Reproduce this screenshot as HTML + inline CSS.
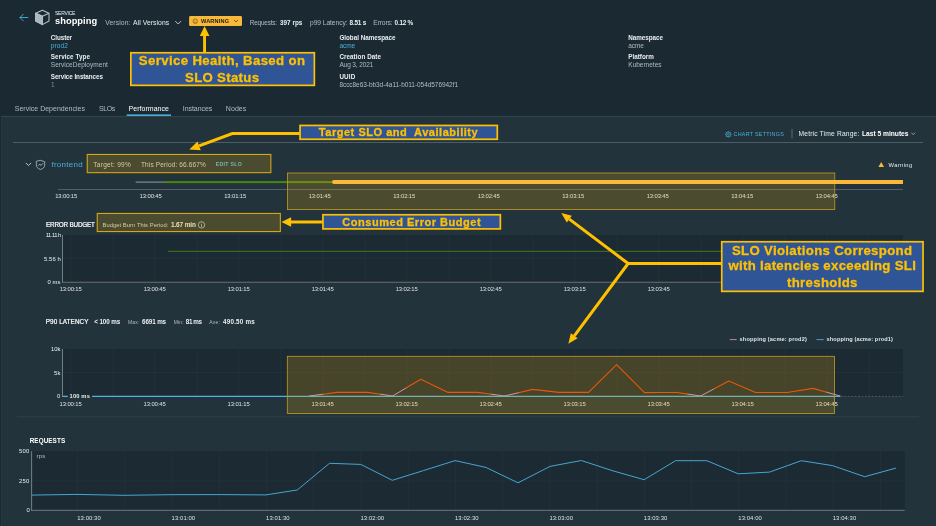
<!DOCTYPE html>
<html lang="en"><head><meta charset="utf-8"><title>Service shopping - Performance</title>
<style>
html,body{margin:0;padding:0;background:#1b2a32;}
#root{position:relative;width:936px;height:526px;overflow:hidden;background:#1b2a32;font-family:"Liberation Sans",sans-serif;}
#gfx,#ovl{position:absolute;left:0;top:0;width:936px;height:526px;display:block;}
.t{position:absolute;white-space:pre;margin:0;padding:0;}
.L{position:absolute;left:0;top:0;width:936px;height:526px;will-change:transform;}

</style></head>
<body>
<div id="root">
<svg id="gfx" width="936" height="526" viewBox="0 0 936 526">
<rect x="0" y="0" width="936" height="116" fill="#1b2a32"/>
<rect x="0" y="116" width="936" height="410" fill="#22333b"/>
<rect x="0" y="116" width="1" height="410" fill="#1b2a32"/>
<rect x="1" y="116" width="0.8" height="410" fill="#283a42"/>
<rect x="1" y="115.9" width="935" height="1" fill="#35474f"/>
<rect x="126.7" y="114.4" width="44.3" height="1.6" fill="#49afd9"/>
<g fill="none" stroke="#49afd9" stroke-width="0.9" stroke-linecap="round" stroke-linejoin="round"><path d="M20 17.5H27.8M23.3 14.2L20 17.5L23.3 20.8"/></g>
<g stroke="#b3bfc6" stroke-width="1.05" stroke-linejoin="round"><path d="M42.4 10.2L49 13.3V21L42.4 24.6L35.7 21V13.3Z" fill="#1b2a32"/><path d="M35.7 13.3L42.4 16.3L49 13.3M42.4 16.3V24.6" fill="none"/><path d="M35.7 13.3L42.4 16.3V24.6L35.7 21Z" fill="#aab7bf"/></g>
<path d="M175.6 21.4L178.2 24L180.8 21.4" fill="none" stroke="#c8d2d8" stroke-width="0.9" stroke-linecap="round" stroke-linejoin="round"/>
<rect x="189.1" y="16.1" width="52.9" height="10" rx="1.4" fill="#f8b838"/>
<g fill="none" stroke="#4a3f1c" stroke-width="0.5"><circle cx="195.3" cy="21.2" r="2.3"/><path d="M194.1 22.2H196.5M194.4 20.4V20.9M196.2 20.4V20.9"/></g>
<path d="M234.2 20.2L236 22L237.8 20.2" fill="none" stroke="#3a3320" stroke-width="0.7" stroke-linecap="round" stroke-linejoin="round"/>
<rect x="13" y="142" width="910" height="0.9" fill="#52636b"/>
<rect x="791.6" y="128.8" width="0.8" height="9.6" fill="#6d7b83"/>
<g transform="translate(-0.2 0.8)" fill="none" stroke="#49afd9" stroke-width="0.7"><circle cx="728.5" cy="133.6" r="2.4"/><circle cx="728.5" cy="133.6" r="0.9"/><path d="M728.5 130.4V131.2M728.5 136V136.8M725.3 133.6H726.1M730.9 133.6H731.7M726.2 131.3L726.8 131.9M730.2 135.3L730.8 135.9M726.2 135.9L726.8 135.3M730.2 131.9L730.8 131.3"/></g>
<path d="M911.6 133L913.2 134.6L914.8 133" fill="none" stroke="#c8d2d8" stroke-width="0.7" stroke-linecap="round" stroke-linejoin="round"/>
<path d="M26.2 163.2L28.5 165.6L30.8 163.2" fill="none" stroke="#c8d2d8" stroke-width="0.9" stroke-linecap="round" stroke-linejoin="round"/>
<g fill="none" stroke="#c8d2d8" stroke-width="0.7" stroke-linejoin="round" stroke-linecap="round"><path d="M40.5 160.4L44.7 161.7V165.1C44.7 167.2 42.9 168.7 40.5 169.5C38.1 168.7 36.3 167.2 36.3 165.1V161.7Z"/><path d="M38.2 165.5L39.7 164L40.9 165.5L42.8 163.5"/></g>
<path d="M881.2 162L884 166.9H878.4Z" fill="#f8b838"/>
<rect x="58" y="189.1" width="845" height="0.8" fill="#5f6d75"/>
<rect x="135.6" y="181.5" width="28.4" height="1.2" fill="#7f8b93"/>
<rect x="164" y="181.1" width="169" height="2" fill="#4a8512"/>
<rect x="62.3" y="235" width="840.7" height="47" fill="#1c2a33"/>
<rect x="70.6" y="235" width="0.7" height="47" fill="#25343c"/>
<rect x="112.6" y="235" width="0.7" height="47" fill="#25343c"/>
<rect x="154.6" y="235" width="0.7" height="47" fill="#25343c"/>
<rect x="196.6" y="235" width="0.7" height="47" fill="#25343c"/>
<rect x="238.6" y="235" width="0.7" height="47" fill="#25343c"/>
<rect x="280.6" y="235" width="0.7" height="47" fill="#25343c"/>
<rect x="322.6" y="235" width="0.7" height="47" fill="#25343c"/>
<rect x="364.6" y="235" width="0.7" height="47" fill="#25343c"/>
<rect x="406.6" y="235" width="0.7" height="47" fill="#25343c"/>
<rect x="448.6" y="235" width="0.7" height="47" fill="#25343c"/>
<rect x="490.6" y="235" width="0.7" height="47" fill="#25343c"/>
<rect x="532.6" y="235" width="0.7" height="47" fill="#25343c"/>
<rect x="574.6" y="235" width="0.7" height="47" fill="#25343c"/>
<rect x="616.6" y="235" width="0.7" height="47" fill="#25343c"/>
<rect x="658.6" y="235" width="0.7" height="47" fill="#25343c"/>
<rect x="700.6" y="235" width="0.7" height="47" fill="#25343c"/>
<rect x="742.6" y="235" width="0.7" height="47" fill="#25343c"/>
<rect x="784.6" y="235" width="0.7" height="47" fill="#25343c"/>
<rect x="826.6" y="235" width="0.7" height="47" fill="#25343c"/>
<rect x="868.6" y="235" width="0.7" height="47" fill="#25343c"/>
<rect x="62.3" y="258.3" width="840.7" height="0.7" fill="#25343c"/>
<rect x="168" y="250.8" width="735" height="1" fill="#3f7d16"/>
<rect x="62" y="235" width="0.9" height="47.4" fill="#7c8991"/>
<rect x="62" y="281.8" width="841" height="0.8" fill="#85787f"/>
<rect x="62.3" y="349" width="840.7" height="47.7" fill="#1c2a33"/>
<rect x="70.6" y="349" width="0.7" height="47.7" fill="#25343c"/>
<rect x="112.6" y="349" width="0.7" height="47.7" fill="#25343c"/>
<rect x="154.6" y="349" width="0.7" height="47.7" fill="#25343c"/>
<rect x="196.6" y="349" width="0.7" height="47.7" fill="#25343c"/>
<rect x="238.6" y="349" width="0.7" height="47.7" fill="#25343c"/>
<rect x="280.6" y="349" width="0.7" height="47.7" fill="#25343c"/>
<rect x="322.6" y="349" width="0.7" height="47.7" fill="#25343c"/>
<rect x="364.6" y="349" width="0.7" height="47.7" fill="#25343c"/>
<rect x="406.6" y="349" width="0.7" height="47.7" fill="#25343c"/>
<rect x="448.6" y="349" width="0.7" height="47.7" fill="#25343c"/>
<rect x="490.6" y="349" width="0.7" height="47.7" fill="#25343c"/>
<rect x="532.6" y="349" width="0.7" height="47.7" fill="#25343c"/>
<rect x="574.6" y="349" width="0.7" height="47.7" fill="#25343c"/>
<rect x="616.6" y="349" width="0.7" height="47.7" fill="#25343c"/>
<rect x="658.6" y="349" width="0.7" height="47.7" fill="#25343c"/>
<rect x="700.6" y="349" width="0.7" height="47.7" fill="#25343c"/>
<rect x="742.6" y="349" width="0.7" height="47.7" fill="#25343c"/>
<rect x="784.6" y="349" width="0.7" height="47.7" fill="#25343c"/>
<rect x="826.6" y="349" width="0.7" height="47.7" fill="#25343c"/>
<rect x="868.6" y="349" width="0.7" height="47.7" fill="#25343c"/>
<rect x="62.3" y="372.3" width="840.7" height="0.7" fill="#25343c"/>
<rect x="62" y="349" width="0.9" height="48" fill="#7c8991"/>
<path d="M309.2 396.0L323.0 394.2M380.3 394.2L392.6 396.0M392.6 396.0L406.7 387.6M491.1 394.2L504.5 396.0M504.5 396.0L518.6 392.7M687.8 394.1L700.6 396.0M700.6 396.0L714.7 388.5M826.6 392.2L840.2 396.0" fill="none" stroke="#cc90c6" stroke-width="1" stroke-linecap="round"/>
<path d="M323.0 394.2L336.8 392.4M336.8 392.4L368.0 392.4M368.0 392.4L380.3 394.2M406.7 387.6L420.8 379.2M420.8 379.2L448.1 392.4M448.1 392.4L477.6 392.4M477.6 392.4L491.1 394.2M518.6 392.7L532.7 389.4M532.7 389.4L559.0 392.4M559.0 392.4L588.5 392.4M588.5 392.4L616.6 364.7M616.6 364.7L644.5 392.6M644.5 392.6L675.0 392.2M675.0 392.2L687.8 394.1M714.7 388.5L728.8 381.0M728.8 381.0L755.6 392.5M755.6 392.5L787.3 392.5M787.3 392.5L813.0 388.4M813.0 388.4L826.6 392.2" fill="none" stroke="#e2420c" stroke-width="1.15" stroke-linecap="round"/>
<path d="M841 396.4H903" stroke="#66747c" stroke-width="0.7" stroke-dasharray="1.9 1.5" fill="none"/>
<path d="M62.8 396.4H67.8M92 396.4H840" stroke="#4fb3dd" stroke-width="1.3" fill="none"/>
<rect x="729.8" y="339.2" width="6.8" height="0.9" fill="#c58fd0"/>
<rect x="816.5" y="339.2" width="7.2" height="0.9" fill="#49afd9"/>
<rect x="17" y="416.4" width="902" height="0.9" fill="#2f414a"/>
<rect x="31.6" y="451.2" width="873.1" height="59" fill="#1c2a33"/>
<rect x="77.3" y="451.2" width="0.7" height="59" fill="#25343c"/>
<rect x="124.5" y="451.2" width="0.7" height="59" fill="#25343c"/>
<rect x="171.7" y="451.2" width="0.7" height="59" fill="#25343c"/>
<rect x="219.0" y="451.2" width="0.7" height="59" fill="#25343c"/>
<rect x="266.2" y="451.2" width="0.7" height="59" fill="#25343c"/>
<rect x="313.4" y="451.2" width="0.7" height="59" fill="#25343c"/>
<rect x="360.6" y="451.2" width="0.7" height="59" fill="#25343c"/>
<rect x="407.8" y="451.2" width="0.7" height="59" fill="#25343c"/>
<rect x="455.1" y="451.2" width="0.7" height="59" fill="#25343c"/>
<rect x="502.3" y="451.2" width="0.7" height="59" fill="#25343c"/>
<rect x="549.5" y="451.2" width="0.7" height="59" fill="#25343c"/>
<rect x="596.7" y="451.2" width="0.7" height="59" fill="#25343c"/>
<rect x="643.9" y="451.2" width="0.7" height="59" fill="#25343c"/>
<rect x="691.2" y="451.2" width="0.7" height="59" fill="#25343c"/>
<rect x="738.4" y="451.2" width="0.7" height="59" fill="#25343c"/>
<rect x="785.6" y="451.2" width="0.7" height="59" fill="#25343c"/>
<rect x="832.8" y="451.2" width="0.7" height="59" fill="#25343c"/>
<rect x="880.0" y="451.2" width="0.7" height="59" fill="#25343c"/>
<rect x="31.6" y="480.6" width="873.1" height="0.7" fill="#25343c"/>
<rect x="31.2" y="451.2" width="0.9" height="59.4" fill="#7c8991"/>
<rect x="31.2" y="509.8" width="873.5" height="0.9" fill="#75828a"/>
<path d="M31.6 495.1 L77.0 494.4 L124.0 495.3 L171.0 494.7 L218.0 494.6 L265.9 494.9 L297.2 490.0 L329.5 463.3 L360.8 464.4 L392.3 480.3 L423.7 470.5 L455.1 460.6 L485.9 467.4 L518.0 482.8 L550.0 466.4 L581.3 460.5 L612.8 470.8 L644.1 479.7 L675.6 460.7 L706.9 460.7 L738.2 473.8 L769.5 472.1 L801.3 460.7 L832.5 465.6 L864.7 476.7 L895.9 468.1" fill="none" stroke="#45a6d4" stroke-width="1" stroke-linejoin="round"/>
</svg>
<!-- text layer -->
<div class="L">
<div class="t" style="left:55.0px;top:10px;font-size:5.0px;line-height:7px;font-weight:400;color:#e9eef1;letter-spacing:-0.239px;">SERVICE</div>
<div class="t" style="left:55.0px;top:15px;font-size:9.3px;line-height:13px;font-weight:700;color:#ffffff;letter-spacing:0.034px;">shopping</div>
<div class="t" style="left:105.2px;top:18px;font-size:6.8px;line-height:10px;font-weight:400;color:#b0bcc3;letter-spacing:0.092px;">Version:</div>
<div class="t" style="left:133.0px;top:18px;font-size:6.8px;line-height:10px;font-weight:400;color:#e9eef1;letter-spacing:0.057px;">All Versions</div>
<div class="t" style="left:201.0px;top:17px;font-size:5.6px;line-height:8px;font-weight:700;color:#1f1d10;letter-spacing:0.165px;">WARNING</div>
<div class="t" style="left:249.7px;top:18px;font-size:6.4px;line-height:9px;font-weight:400;color:#b0bcc3;letter-spacing:-0.165px;">Requests:</div>
<div class="t" style="left:279.9px;top:18px;font-size:6.4px;line-height:9px;font-weight:700;color:#e9eef1;letter-spacing:0.016px;">397 rps</div>
<div class="t" style="left:310.0px;top:18px;font-size:6.7px;line-height:9px;font-weight:400;color:#b0bcc3;letter-spacing:-0.066px;">p99 Latency:</div>
<div class="t" style="left:349.6px;top:18px;font-size:6.4px;line-height:9px;font-weight:700;color:#e9eef1;letter-spacing:-0.230px;">8.51 s</div>
<div class="t" style="left:373.3px;top:18px;font-size:6.7px;line-height:9px;font-weight:400;color:#b0bcc3;letter-spacing:-0.123px;">Errors:</div>
<div class="t" style="left:394.6px;top:18px;font-size:6.4px;line-height:9px;font-weight:700;color:#e9eef1;letter-spacing:-0.268px;">0.12 %</div>
<div class="t" style="left:50.8px;top:33px;font-size:6.3px;line-height:9px;font-weight:700;color:#e9eef1;letter-spacing:-0.072px;">Cluster</div>
<div class="t" style="left:50.8px;top:41px;font-size:6.5px;line-height:9px;font-weight:400;color:#49afd9;letter-spacing:0.115px;">prod2</div>
<div class="t" style="left:50.8px;top:52px;font-size:6.3px;line-height:9px;font-weight:700;color:#e9eef1;letter-spacing:0.067px;">Service Type</div>
<div class="t" style="left:50.8px;top:60px;font-size:6.5px;line-height:9px;font-weight:400;color:#b0bcc3;letter-spacing:0.044px;">ServiceDeployment</div>
<div class="t" style="left:50.8px;top:72px;font-size:6.3px;line-height:9px;font-weight:700;color:#e9eef1;letter-spacing:-0.066px;">Service Instances</div>
<div class="t" style="left:51.0px;top:80px;font-size:6.5px;line-height:9px;font-weight:400;color:#7e8c95;letter-spacing:-1.625px;">1</div>
<div class="t" style="left:339.4px;top:33px;font-size:6.3px;line-height:9px;font-weight:700;color:#e9eef1;letter-spacing:-0.010px;">Global Namespace</div>
<div class="t" style="left:339.4px;top:41px;font-size:6.5px;line-height:9px;font-weight:400;color:#49afd9;letter-spacing:-0.027px;">acme</div>
<div class="t" style="left:339.4px;top:52px;font-size:6.3px;line-height:9px;font-weight:700;color:#e9eef1;letter-spacing:0.050px;">Creation Date</div>
<div class="t" style="left:339.4px;top:60px;font-size:6.5px;line-height:9px;font-weight:400;color:#b0bcc3;letter-spacing:-0.106px;">Aug 3, 2021</div>
<div class="t" style="left:339.4px;top:72px;font-size:6.3px;line-height:9px;font-weight:700;color:#e9eef1;letter-spacing:0.148px;">UUID</div>
<div class="t" style="left:339.4px;top:80px;font-size:6.5px;line-height:9px;font-weight:400;color:#b0bcc3;letter-spacing:-0.052px;">8ccc8e63-bb3d-4a11-b011-054d576942f1</div>
<div class="t" style="left:628.3px;top:33px;font-size:6.3px;line-height:9px;font-weight:700;color:#e9eef1;letter-spacing:-0.035px;">Namespace</div>
<div class="t" style="left:628.3px;top:41px;font-size:6.5px;line-height:9px;font-weight:400;color:#b0bcc3;letter-spacing:-0.102px;">acme</div>
<div class="t" style="left:628.3px;top:52px;font-size:6.3px;line-height:9px;font-weight:700;color:#e9eef1;letter-spacing:-0.006px;">Platform</div>
<div class="t" style="left:628.3px;top:60px;font-size:6.5px;line-height:9px;font-weight:400;color:#b0bcc3;letter-spacing:-0.005px;">Kubernetes</div>
<div class="t" style="left:14.8px;top:104px;font-size:7.0px;line-height:10px;font-weight:400;color:#b0bcc3;letter-spacing:0.008px;">Service Dependencies</div>
<div class="t" style="left:98.9px;top:104px;font-size:7.0px;line-height:10px;font-weight:400;color:#b0bcc3;letter-spacing:-0.354px;">SLOs</div>
<div class="t" style="left:128.6px;top:104px;font-size:7.0px;line-height:10px;font-weight:400;color:#ffffff;letter-spacing:0.020px;">Performance</div>
<div class="t" style="left:182.8px;top:104px;font-size:7.0px;line-height:10px;font-weight:400;color:#b0bcc3;letter-spacing:-0.063px;">Instances</div>
<div class="t" style="left:225.8px;top:104px;font-size:7.0px;line-height:10px;font-weight:400;color:#b0bcc3;letter-spacing:0.073px;">Nodes</div>
<div class="t" style="left:733.5px;top:130px;font-size:5.4px;line-height:8px;font-weight:400;color:#49afd9;letter-spacing:0.262px;">CHART SETTINGS</div>
<div class="t" style="left:798.5px;top:129px;font-size:6.7px;line-height:9px;font-weight:400;color:#e9eef1;letter-spacing:0.168px;">Metric Time Range:</div>
<div class="t" style="left:862.0px;top:129px;font-size:6.7px;line-height:9px;font-weight:700;color:#ffffff;letter-spacing:-0.023px;">Last 5 minutes</div>
<div class="t" style="left:51.4px;top:159px;font-size:8.0px;line-height:11px;font-weight:400;color:#49afd9;letter-spacing:0.268px;">frontend</div>
<div class="t" style="left:93.3px;top:160px;font-size:6.5px;line-height:9px;font-weight:400;color:#cfd1c4;letter-spacing:0.274px;">Target: 99%</div>
<div class="t" style="left:141.0px;top:160px;font-size:6.5px;line-height:9px;font-weight:400;color:#cfd1c4;letter-spacing:0.142px;">This Period: 66.667%</div>
<div class="t" style="left:215.8px;top:161px;font-size:5.2px;line-height:7px;font-weight:700;color:#52b4dc;letter-spacing:0.285px;">EDIT SLO</div>
<div class="t" style="left:888.5px;top:161px;font-size:5.8px;line-height:8px;font-weight:400;color:#e9eef1;letter-spacing:0.375px;">Warning</div>
<div class="t" style="left:55.2px;top:192px;font-size:5.9px;line-height:8px;font-weight:400;color:#dfe4e7;letter-spacing:-0.117px;">13:00:15</div>
<div class="t" style="left:139.7px;top:192px;font-size:5.9px;line-height:8px;font-weight:400;color:#dfe4e7;letter-spacing:-0.117px;">13:00:45</div>
<div class="t" style="left:224.2px;top:192px;font-size:5.9px;line-height:8px;font-weight:400;color:#dfe4e7;letter-spacing:-0.117px;">13:01:15</div>
<div class="t" style="left:308.7px;top:192px;font-size:5.9px;line-height:8px;font-weight:400;color:#dfe4e7;letter-spacing:-0.117px;">13:01:45</div>
<div class="t" style="left:393.2px;top:192px;font-size:5.9px;line-height:8px;font-weight:400;color:#dfe4e7;letter-spacing:-0.117px;">13:02:15</div>
<div class="t" style="left:477.7px;top:192px;font-size:5.9px;line-height:8px;font-weight:400;color:#dfe4e7;letter-spacing:-0.117px;">13:02:45</div>
<div class="t" style="left:562.2px;top:192px;font-size:5.9px;line-height:8px;font-weight:400;color:#dfe4e7;letter-spacing:-0.117px;">13:03:15</div>
<div class="t" style="left:646.7px;top:192px;font-size:5.9px;line-height:8px;font-weight:400;color:#dfe4e7;letter-spacing:-0.117px;">13:03:45</div>
<div class="t" style="left:731.2px;top:192px;font-size:5.9px;line-height:8px;font-weight:400;color:#dfe4e7;letter-spacing:-0.117px;">13:04:15</div>
<div class="t" style="left:815.7px;top:192px;font-size:5.9px;line-height:8px;font-weight:400;color:#dfe4e7;letter-spacing:-0.117px;">13:04:45</div>
<div class="t" style="left:46.0px;top:220px;font-size:6.3px;line-height:9px;font-weight:400;color:#ffffff;letter-spacing:-0.161px;-webkit-text-stroke:0.2px #fff;">ERROR BUDGET</div>
<div class="t" style="left:102.5px;top:221px;font-size:5.8px;line-height:8px;font-weight:400;color:#cfd1c4;letter-spacing:0.055px;">Budget Burn This Period:</div>
<div class="t" style="left:171.0px;top:220px;font-size:6.5px;line-height:9px;font-weight:700;color:#e6e6da;letter-spacing:-0.152px;">1.67 min</div>
<div class="t" style="left:45.7px;top:231px;font-size:5.9px;line-height:8px;font-weight:400;color:#e9eef1;letter-spacing:-0.512px;">11.11 h</div>
<div class="t" style="left:44.0px;top:255px;font-size:5.9px;line-height:8px;font-weight:400;color:#e9eef1;letter-spacing:0.085px;">5.56 h</div>
<div class="t" style="left:47.4px;top:278px;font-size:5.9px;line-height:8px;font-weight:400;color:#e9eef1;letter-spacing:0.109px;">0 ms</div>
<div class="t" style="left:59.7px;top:285px;font-size:5.9px;line-height:8px;font-weight:400;color:#dfe4e7;letter-spacing:-0.117px;">13:00:15</div>
<div class="t" style="left:143.7px;top:285px;font-size:5.9px;line-height:8px;font-weight:400;color:#dfe4e7;letter-spacing:-0.117px;">13:00:45</div>
<div class="t" style="left:227.7px;top:285px;font-size:5.9px;line-height:8px;font-weight:400;color:#dfe4e7;letter-spacing:-0.117px;">13:01:15</div>
<div class="t" style="left:311.7px;top:285px;font-size:5.9px;line-height:8px;font-weight:400;color:#dfe4e7;letter-spacing:-0.117px;">13:01:45</div>
<div class="t" style="left:395.7px;top:285px;font-size:5.9px;line-height:8px;font-weight:400;color:#dfe4e7;letter-spacing:-0.117px;">13:02:15</div>
<div class="t" style="left:479.7px;top:285px;font-size:5.9px;line-height:8px;font-weight:400;color:#dfe4e7;letter-spacing:-0.117px;">13:02:45</div>
<div class="t" style="left:563.7px;top:285px;font-size:5.9px;line-height:8px;font-weight:400;color:#dfe4e7;letter-spacing:-0.117px;">13:03:15</div>
<div class="t" style="left:647.7px;top:285px;font-size:5.9px;line-height:8px;font-weight:400;color:#dfe4e7;letter-spacing:-0.117px;">13:03:45</div>
<div class="t" style="left:45.7px;top:317px;font-size:6.3px;line-height:9px;font-weight:400;color:#ffffff;letter-spacing:0.124px;-webkit-text-stroke:0.2px #fff;">P90 LATENCY</div>
<div class="t" style="left:94.2px;top:317px;font-size:6.3px;line-height:9px;font-weight:700;color:#e9eef1;letter-spacing:-0.087px;">&lt; 100 ms</div>
<div class="t" style="left:127.9px;top:319px;font-size:5.0px;line-height:7px;font-weight:400;color:#b0bcc3;letter-spacing:0.264px;">Max:</div>
<div class="t" style="left:142.0px;top:317px;font-size:6.3px;line-height:9px;font-weight:700;color:#e9eef1;letter-spacing:-0.123px;">6691 ms</div>
<div class="t" style="left:173.8px;top:319px;font-size:5.0px;line-height:7px;font-weight:400;color:#b0bcc3;letter-spacing:0.137px;">Min:</div>
<div class="t" style="left:185.8px;top:317px;font-size:6.3px;line-height:9px;font-weight:700;color:#e9eef1;letter-spacing:-0.392px;">81 ms</div>
<div class="t" style="left:209.2px;top:319px;font-size:5.0px;line-height:7px;font-weight:400;color:#b0bcc3;letter-spacing:0.320px;">Ave:</div>
<div class="t" style="left:223.0px;top:317px;font-size:6.3px;line-height:9px;font-weight:700;color:#e9eef1;letter-spacing:0.208px;">490.50 ms</div>
<div class="t" style="left:739.6px;top:335px;font-size:5.6px;line-height:8px;font-weight:700;color:#dfe5e8;letter-spacing:0.167px;">shopping (acme: prod2)</div>
<div class="t" style="left:826.6px;top:335px;font-size:5.6px;line-height:8px;font-weight:700;color:#dfe5e8;letter-spacing:0.122px;">shopping (acme: prod1)</div>
<div class="t" style="left:51.0px;top:345px;font-size:5.9px;line-height:8px;font-weight:400;color:#e9eef1;letter-spacing:0.033px;">10k</div>
<div class="t" style="left:53.9px;top:369px;font-size:5.9px;line-height:8px;font-weight:400;color:#e9eef1;letter-spacing:0.233px;">5k</div>
<div class="t" style="left:56.9px;top:392px;font-size:5.9px;line-height:8px;font-weight:400;color:#e9eef1;letter-spacing:0.319px;">0</div>
<div class="t" style="left:69.6px;top:392px;font-size:5.8px;line-height:8px;font-weight:700;color:#e9eef1;letter-spacing:0.121px;">100 ms</div>
<div class="t" style="left:59.6px;top:400px;font-size:5.9px;line-height:8px;font-weight:400;color:#dfe4e7;letter-spacing:-0.117px;">13:00:15</div>
<div class="t" style="left:143.6px;top:400px;font-size:5.9px;line-height:8px;font-weight:400;color:#dfe4e7;letter-spacing:-0.117px;">13:00:45</div>
<div class="t" style="left:227.6px;top:400px;font-size:5.9px;line-height:8px;font-weight:400;color:#dfe4e7;letter-spacing:-0.117px;">13:01:15</div>
<div class="t" style="left:311.6px;top:400px;font-size:5.9px;line-height:8px;font-weight:400;color:#dfe4e7;letter-spacing:-0.117px;">13:01:45</div>
<div class="t" style="left:395.6px;top:400px;font-size:5.9px;line-height:8px;font-weight:400;color:#dfe4e7;letter-spacing:-0.117px;">13:02:15</div>
<div class="t" style="left:479.6px;top:400px;font-size:5.9px;line-height:8px;font-weight:400;color:#dfe4e7;letter-spacing:-0.117px;">13:02:45</div>
<div class="t" style="left:563.6px;top:400px;font-size:5.9px;line-height:8px;font-weight:400;color:#dfe4e7;letter-spacing:-0.117px;">13:03:15</div>
<div class="t" style="left:647.6px;top:400px;font-size:5.9px;line-height:8px;font-weight:400;color:#dfe4e7;letter-spacing:-0.117px;">13:03:45</div>
<div class="t" style="left:731.6px;top:400px;font-size:5.9px;line-height:8px;font-weight:400;color:#dfe4e7;letter-spacing:-0.117px;">13:04:15</div>
<div class="t" style="left:815.6px;top:400px;font-size:5.9px;line-height:8px;font-weight:400;color:#dfe4e7;letter-spacing:-0.117px;">13:04:45</div>
<div class="t" style="left:29.7px;top:436px;font-size:6.3px;line-height:9px;font-weight:700;color:#ffffff;letter-spacing:0.107px;">REQUESTS</div>
<div class="t" style="left:18.9px;top:447px;font-size:5.9px;line-height:8px;font-weight:400;color:#e9eef1;letter-spacing:0.219px;">500</div>
<div class="t" style="left:18.9px;top:477px;font-size:5.9px;line-height:8px;font-weight:400;color:#e9eef1;letter-spacing:0.219px;">250</div>
<div class="t" style="left:26.4px;top:506px;font-size:5.9px;line-height:8px;font-weight:400;color:#e9eef1;letter-spacing:-0.281px;">0</div>
<div class="t" style="left:36.6px;top:451px;font-size:6.2px;line-height:9px;font-weight:400;color:#b0bcc3;letter-spacing:0.097px;">rps</div>
<div class="t" style="left:77.2px;top:514px;font-size:5.9px;line-height:8px;font-weight:400;color:#dfe4e7;letter-spacing:0.083px;">13:00:30</div>
<div class="t" style="left:171.6px;top:514px;font-size:5.9px;line-height:8px;font-weight:400;color:#dfe4e7;letter-spacing:0.083px;">13:01:00</div>
<div class="t" style="left:266.1px;top:514px;font-size:5.9px;line-height:8px;font-weight:400;color:#dfe4e7;letter-spacing:0.083px;">13:01:30</div>
<div class="t" style="left:360.5px;top:514px;font-size:5.9px;line-height:8px;font-weight:400;color:#dfe4e7;letter-spacing:0.083px;">13:02:00</div>
<div class="t" style="left:455.0px;top:514px;font-size:5.9px;line-height:8px;font-weight:400;color:#dfe4e7;letter-spacing:0.083px;">13:02:30</div>
<div class="t" style="left:549.4px;top:514px;font-size:5.9px;line-height:8px;font-weight:400;color:#dfe4e7;letter-spacing:0.083px;">13:03:00</div>
<div class="t" style="left:643.8px;top:514px;font-size:5.9px;line-height:8px;font-weight:400;color:#dfe4e7;letter-spacing:0.083px;">13:03:30</div>
<div class="t" style="left:738.3px;top:514px;font-size:5.9px;line-height:8px;font-weight:400;color:#dfe4e7;letter-spacing:0.083px;">13:04:00</div>
<div class="t" style="left:832.7px;top:514px;font-size:5.9px;line-height:8px;font-weight:400;color:#dfe4e7;letter-spacing:0.083px;">13:04:30</div>
</div>
<svg id="ovl" width="936" height="526" viewBox="0 0 936 526">
<rect x="87.25" y="154.45" width="183.60" height="18.20" fill="rgba(255,180,0,0.19)" stroke="#d6a616" stroke-width="1.1"/>
<rect x="287.40" y="173.00" width="547.40" height="36.60" fill="rgba(255,180,0,0.19)" stroke="#c49d1e" stroke-width="0.8"/>
<rect x="97.25" y="213.45" width="183.10" height="18.10" fill="rgba(255,180,0,0.19)" stroke="#d6a616" stroke-width="1.1"/>
<rect x="287.30" y="356.30" width="547.30" height="57.30" fill="rgba(255,180,0,0.19)" stroke="#c49d1e" stroke-width="0.8"/>
<path d="M334 180.1H903V184H334A1.95 1.95 0 0 1 334 180.1Z" fill="#f9b838"/>
<g fill="none" stroke="#e6e6da" stroke-width="0.6"><circle cx="201.5" cy="224.9" r="3.2"/><path d="M201.5 224.2V226.9M201.5 222.8V223.3"/></g>
<path d="M204.55 53V35.5" stroke="#ffc000" stroke-width="2.9" fill="none"/>
<path d="M204.6 26.0L209.4 36.0L199.8 36.0Z" fill="#ffc000"/>
<path d="M300 133.5H232.3L199.1 145.9" stroke="#ffc000" stroke-width="3" fill="none" stroke-linejoin="miter"/>
<path d="M189.3 149.6L197.5 141.6L200.7 150.2Z" fill="#ffc000"/>
<path d="M323 222H290.6" stroke="#ffc000" stroke-width="3" fill="none"/>
<path d="M281.5 222.0L291.1 217.3L291.1 226.7Z" fill="#ffc000"/>
<path d="M722 263.5H628.1L569.3 219.1M628.1 263.5L574.3 335.8" stroke="#ffc000" stroke-width="3" fill="none" stroke-linejoin="round"/>
<path d="M561.3 213.1L571.8 215.8L566.8 222.5Z" fill="#ffc000"/>
<path d="M568.3 343.8L570.9 333.3L577.6 338.3Z" fill="#ffc000"/>
<rect x="130.85" y="52.75" width="183.50" height="32.60" fill="#2f5597" stroke="#ffc000" stroke-width="1.7"/>
<rect x="300.05" y="125.45" width="197.25" height="13.80" fill="#2f5597" stroke="#ffc000" stroke-width="1.7"/>
<rect x="322.95" y="214.75" width="177.40" height="14.15" fill="#2f5597" stroke="#ffc000" stroke-width="1.7"/>
<rect x="721.75" y="241.75" width="201.30" height="49.60" fill="#2f5597" stroke="#ffc000" stroke-width="1.7"/>
</svg>
<!-- callout text -->
<div class="L">
<div class="t" style="left:138.8px;top:52px;font-size:13.2px;line-height:18px;font-weight:700;color:#ffc000;letter-spacing:0.375px;-webkit-text-stroke:0.3px #ffc000;">Service Health, Based on</div>
<div class="t" style="left:185.0px;top:69px;font-size:13.2px;line-height:18px;font-weight:700;color:#ffc000;letter-spacing:0.332px;-webkit-text-stroke:0.3px #ffc000;">SLO Status</div>
<div class="t" style="left:318.8px;top:125px;font-size:11.0px;line-height:15px;font-weight:700;color:#ffc000;letter-spacing:0.533px;-webkit-text-stroke:0.3px #ffc000;">Target SLO and  Availability</div>
<div class="t" style="left:342.3px;top:215px;font-size:11.0px;line-height:15px;font-weight:700;color:#ffc000;letter-spacing:0.532px;-webkit-text-stroke:0.3px #ffc000;">Consumed Error Budget</div>
<div class="t" style="left:731.9px;top:242px;font-size:13.2px;line-height:18px;font-weight:700;color:#ffc000;letter-spacing:0.342px;-webkit-text-stroke:0.3px #ffc000;">SLO Violations Correspond</div>
<div class="t" style="left:728.4px;top:257px;font-size:13.2px;line-height:18px;font-weight:700;color:#ffc000;letter-spacing:0.320px;-webkit-text-stroke:0.3px #ffc000;">with latencies exceeding SLI</div>
<div class="t" style="left:787.0px;top:274px;font-size:13.2px;line-height:18px;font-weight:700;color:#ffc000;letter-spacing:0.338px;-webkit-text-stroke:0.3px #ffc000;">thresholds</div>
</div>
</div>
</body></html>
